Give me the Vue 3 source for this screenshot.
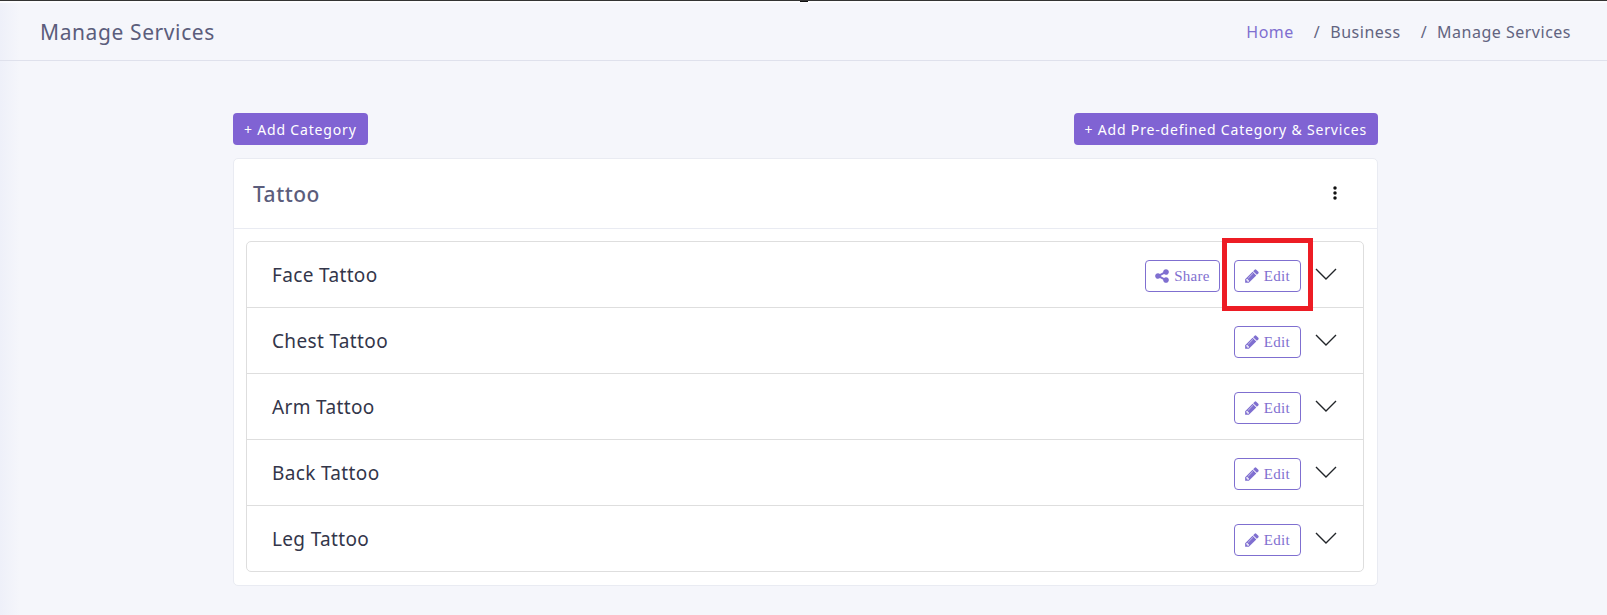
<script setup>
const rows = [
  { name: 'Face Tattoo', share: true, marked: true },
  { name: 'Chest Tattoo' },
  { name: 'Arm Tattoo' },
  { name: 'Back Tattoo' },
  { name: 'Leg Tattoo' },
]
</script>

<template>
  <div class="page">
    <span class="notch"></span>
    <header class="top">
      <h1>Manage Services</h1>
      <nav class="crumbs">
        <span class="home">Home</span>
        <span class="sep">/</span><span>Business</span>
        <span class="sep">/</span><span>Manage Services</span>
      </nav>
    </header>
    <main class="content">
      <div class="actions">
        <button class="primary">+ Add Category</button>
        <button class="primary">+ Add Pre-defined Category &amp; Services</button>
      </div>
      <section class="card">
        <div class="card-head">
          <h2>Tattoo</h2>
          <svg class="dots" viewBox="0 0 4 14" width="4" height="14"><circle cx="2" cy="2" r="1.75"/><circle cx="2" cy="7" r="1.75"/><circle cx="2" cy="12" r="1.75"/></svg>
        </div>
        <div class="list">
          <div v-for="r in rows" :key="r.name" class="row">
            <span class="name">{{ r.name }}</span>
            <div class="tools">
              <button v-if="r.share" class="outline share">
                <svg viewBox="0 0 1792 1792" width="16" height="16"><path d="M1344 1024q133 0 226.5 93.5t93.5 226.5-93.5 226.5-226.5 93.5-226.5-93.5-93.5-226.5q0-12 2-34l-360-180q-92 86-218 86-133 0-226.5-93.5t-93.5-226.5 93.5-226.5 226.5-93.5q126 0 218 86l360-180q-2-22-2-34 0-133 93.5-226.5t226.5-93.5 226.5 93.5 93.5 226.5-93.5 226.5-226.5 93.5q-126 0-218-86l-360 180q2 22 2 34t-2 34l360 180q92-86 218-86z"/></svg>
                Share
              </button>
              <span class="edit-wrap">
                <button class="outline">
                  <svg viewBox="0 0 1792 1792" width="16" height="16"><path d="M491 1536l91-91-235-235-91 91v107h128v128h107zm523-928q0-22-22-22-10 0-17 7l-542 542q-7 7-7 17 0 22 22 22 10 0 17-7l542-542q7-7 7-17zm-54-192l416 416-832 832h-416v-416zm683 96q0 53-37 90l-166 166-416-416 166-165q36-38 90-38 53 0 91 38l235 234q37 39 37 91z"/></svg>
                  Edit
                </button>
                <span v-if="r.marked" class="mark"></span>
              </span>
              <svg class="chev" viewBox="0 0 22 12" width="22" height="12"><path d="M1 1l10 10L21 1" fill="none" stroke="#212529" stroke-width="1.4"/></svg>
            </div>
          </div>
        </div>
      </section>
    </main>
  </div>
</template>

<style>
html, body { margin: 0; background: #f5f6fb; }
</style>

<style scoped>
.page {
  position: relative;
  height: 615px;
  overflow: hidden;
  box-sizing: border-box;
  border-top: 1px solid #333;
  background: linear-gradient(90deg, #eef0f9 0, #f5f6fb 20px);
  font-family: "Noto Sans", sans-serif;
}
.notch {
  position: absolute;
  left: 800px;
  top: -1px;
  width: 8px;
  height: 2px;
  background: #111;
}
.top {
  height: 60px;
  box-sizing: border-box;
  border-top: 2px solid #fcfcfe;
  border-bottom: 1px solid #dfe1ec;
  display: flex;
  align-items: center;
  justify-content: space-between;
  padding: 0 36px 0 40px;
}
h1 { margin: 0; font-size: 21px; font-weight: 400; color: #5b5d7c; letter-spacing: .6px; }
.crumbs { display: flex; font-size: 16px; letter-spacing: .5px; color: #626480; }
.home { color: #7f6fd0; }
.sep { margin: 0 10px 0 20px; }
.content { width: 1145px; margin-left: 233px; padding-top: 52px; }
.actions { display: flex; justify-content: space-between; margin-bottom: 13px; }
.primary {
  height: 32px;
  padding: 0 11px;
  border: 0;
  border-radius: 4px;
  background: #8063d3;
  color: #fff;
  font: 14px "Noto Sans", sans-serif;
  letter-spacing: .82px;
}
.card {
  background: #fff;
  border: 1px solid #e9ebf2;
  border-radius: 5px;
  padding-bottom: 13px;
}
.card-head {
  height: 69px;
  display: flex;
  align-items: center;
  justify-content: space-between;
  padding: 0 40px 0 19px;
  border-bottom: 1px solid #e9ebf2;
  margin-bottom: 12px;
}
h2 { margin: 0; font-size: 21px; font-weight: 500; color: #5b5d7c; letter-spacing: .5px; }
.dots { fill: #111; margin-top: -2px; }
.list {
  margin: 0 13px 0 12px;
  border: 1px solid #dedede;
  border-radius: 5px;
}
.row {
  height: 66px;
  box-sizing: border-box;
  display: flex;
  align-items: center;
  justify-content: space-between;
  padding: 0 26px 0 25px;
  border-bottom: 1px solid #dedede;
}
.row:last-child { border-bottom: 0; height: 65px; }
.name { font-size: 19px; letter-spacing: .35px; color: #33364a; padding-top: 1px; }
.tools { display: flex; align-items: center; gap: 14px; margin-top: 3px; }
.outline {
  height: 32px;
  box-sizing: border-box;
  padding: 0 10px 0 9px;
  display: flex;
  align-items: center;
  gap: 4px;
  background: #fff;
  border: 1px solid #7f6fd0;
  border-radius: 4px;
  color: #7f6fd0;
  font: 15px "Liberation Serif", serif;
  letter-spacing: .3px;
}
.share { padding: 0 9px 0 8px; }
.outline svg { fill: #7f6fd0; }
.edit-wrap { position: relative; display: block; }
.mark {
  position: absolute;
  left: -12px;
  top: -22px;
  width: 91px;
  height: 73px;
  box-sizing: border-box;
  border: 5px solid #ed1c24;
}
.chev { margin: 0 0 4px; }
</style>
